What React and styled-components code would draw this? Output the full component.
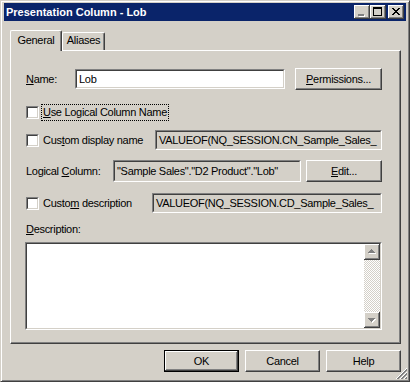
import React from 'react';
import styled, { createGlobalStyle } from 'styled-components';

const FACE = '#D4D0C8';
const SHADOW = '#808080';
const DARK = '#404040';
const HI = '#FFFFFF';

const GlobalStyle = createGlobalStyle`
  html, body { margin: 0; padding: 0; background: ${FACE}; }
  body {
    font-family: "Liberation Sans", Arial, sans-serif;
    font-size: 11px;
    letter-spacing: -0.3px;
    color: #000;
    -webkit-font-smoothing: none;
  }
  #root { width: 410px; height: 382px; }
`;

const Window = styled.div`
  position: relative;
  box-sizing: border-box;
  width: 410px;
  height: 382px;
  background: ${FACE};
  border: 1px solid;
  border-color: ${FACE} ${DARK} ${DARK} ${FACE};
  box-shadow: inset 1px 1px ${HI}, inset -1px -1px ${SHADOW};
  padding: 2px 3px 3px 3px;
  display: flex;
  flex-direction: column;
  overflow: hidden;
`;

const TitleBar = styled.div`
  height: 18px;
  background: #0A246A;
  display: flex;
  align-items: center;
  padding: 0 2px;
`;

const TitleText = styled.span`
  flex: 1;
  color: #fff;
  font-weight: bold;
  font-size: 11px;
  letter-spacing: 0;
  white-space: nowrap;
`;

const CaptionGroup = styled.div`
  display: flex;
  align-items: center;
`;

const CaptionButton = styled.div`
  width: 16px;
  height: 14px;
  margin-left: ${p => p.$gap || 0}px;
  background: ${FACE};
  box-shadow: inset -1px -1px ${DARK}, inset 1px 1px ${HI}, inset -2px -2px ${SHADOW};
  display: flex;
  svg { display: block; }
`;

const TabRow = styled.div`
  display: flex;
  align-items: flex-end;
  height: 20px;
  margin-top: 9px;
  padding-left: 6px;
`;

const Tab = styled.div`
  position: relative;
  z-index: ${p => (p.$active ? 1 : 0)};
  box-sizing: border-box;
  width: ${p => p.$w}px;
  height: ${p => (p.$active ? 21 : 18)}px;
  margin-bottom: ${p => (p.$active ? -1 : 0)}px;
  background: ${FACE};
  border-top: 1px solid ${HI};
  border-left: 1px solid ${HI};
  border-right: 1px solid ${DARK};
  border-radius: 2px 2px 0 0;
  box-shadow: inset -1px 0 ${SHADOW};
  display: flex;
  justify-content: center;
  padding-top: ${p => (p.$active ? 3 : 1)}px;
  line-height: 13px;
  white-space: nowrap;
`;

const Panel = styled.div`
  box-sizing: border-box;
  height: 294px;
  margin: 0 5px 0 6px;
  border: 1px solid;
  border-color: ${HI} ${DARK} ${DARK} ${HI};
  box-shadow: inset -1px -1px ${SHADOW};
  padding: 17px 18px 0 15px;
  display: flex;
  flex-direction: column;
`;

const Row = styled.div`
  display: flex;
  align-items: center;
  height: ${p => p.$h}px;
  margin-top: ${p => p.$mt || 0}px;
  white-space: nowrap;
`;

const Label = styled.span`
  width: ${p => (p.$w ? `${p.$w}px` : 'auto')};
  flex: none;
  line-height: 13px;
`;

const SunkenOuter = styled.div`
  box-sizing: border-box;
  flex: none;
  width: ${p => p.$w}px;
  height: ${p => p.$h}px;
  margin-left: ${p => (p.$ml === 'auto' ? 'auto' : `${p.$ml || 0}px`)};
  border: 1px solid;
  border-color: ${SHADOW} ${HI} ${HI} ${SHADOW};
  display: flex;
`;

const SunkenInner = styled.div`
  flex: 1;
  min-width: 0;
  border: 1px solid;
  border-color: ${DARK} ${FACE} ${FACE} ${DARK};
  background: ${p => (p.$readOnly ? FACE : HI)};
  display: flex;
  align-items: center;
  overflow: hidden;
  padding-left: ${p => p.$pl ?? 2}px;
  white-space: nowrap;
`;

const Button = styled.div`
  box-sizing: border-box;
  flex: none;
  width: ${p => p.$w}px;
  height: 22px;
  margin-left: ${p => p.$ml || 0}px;
  background: ${FACE};
  border: 1px solid;
  border-color: ${p => (p.$default ? '#000' : `${HI} ${DARK} ${DARK} ${HI}`)};
  box-shadow: ${p =>
    p.$default
      ? `inset -1px -1px ${DARK}, inset 1px 1px ${HI}, inset -2px -2px ${SHADOW}`
      : `inset -1px -1px ${SHADOW}`};
  display: flex;
  align-items: center;
  justify-content: center;
  line-height: 13px;
`;

const CheckLabel = styled.span`
  margin-left: ${p => (p.$focus ? 3 : 4)}px;
  padding: ${p => (p.$focus ? '1px 1px' : '0')};
  outline: ${p => (p.$focus ? '1px dotted #000' : 'none')};
  line-height: 13px;
`;

const TextArea = styled.div`
  box-sizing: border-box;
  width: 357px;
  height: 88px;
  margin-left: -1px;
  margin-top: 6px;
  border: 1px solid;
  border-color: ${SHADOW} ${HI} ${HI} ${SHADOW};
  display: flex;
`;

const TextAreaInner = styled.div`
  flex: 1;
  border: 1px solid;
  border-color: ${DARK} ${FACE} ${FACE} ${DARK};
  background: ${HI};
  display: flex;
  justify-content: flex-end;
`;

const ScrollBar = styled.div`
  width: 16px;
  display: flex;
  flex-direction: column;
`;

const ScrollTrack = styled.div`
  flex: 1;
  background-color: ${FACE};
  background-image: repeating-conic-gradient(${HI} 0 25%, ${FACE} 0 50%);
  background-size: 2px 2px;
`;

const ArrowButton = styled.div`
  width: 16px;
  height: 16px;
  flex: none;
  background: ${FACE};
  box-shadow: inset -1px -1px ${DARK}, inset 1px 1px ${HI}, inset -2px -2px ${SHADOW};
  svg { display: block; }
`;

const Footer = styled.div`
  display: flex;
  justify-content: flex-end;
  gap: 6px;
  margin-top: 6px;
  padding-right: 5px;
`;

const Grip = styled.svg`
  position: absolute;
  right: 1px;
  bottom: 1px;
  display: block;
`;

const Cb = () => (
  <SunkenOuter $w={13} $h={13}>
    <SunkenInner />
  </SunkenOuter>
);

const px = (cells, color) =>
  cells.map(([x, y, w, h], i) => <rect key={color + i} x={x} y={y} width={w} height={h} fill={color} />);

const MinGlyph = () => (
  <svg width="16" height="14" viewBox="0 0 16 14" shapeRendering="crispEdges">
    {px([[5, 10, 6, 2]], HI)}
    {px([[4, 9, 6, 2]], SHADOW)}
  </svg>
);

const MaxGlyph = () => (
  <svg width="16" height="14" viewBox="0 0 16 14" shapeRendering="crispEdges">
    {px([[3, 2, 9, 2], [3, 4, 1, 7], [11, 4, 1, 7], [3, 10, 9, 1]], '#000')}
  </svg>
);

const CloseGlyph = () => (
  <svg width="16" height="14" viewBox="0 0 16 14" shapeRendering="crispEdges">
    {px(
      [
        [4, 3, 2, 1], [10, 3, 2, 1],
        [5, 4, 2, 1], [9, 4, 2, 1],
        [6, 5, 4, 1],
        [7, 6, 2, 1],
        [6, 7, 4, 1],
        [5, 8, 2, 1], [9, 8, 2, 1],
        [4, 9, 2, 1], [10, 9, 2, 1],
      ],
      '#000'
    )}
  </svg>
);

const UpGlyph = () => (
  <svg width="16" height="16" viewBox="0 0 16 16" shapeRendering="crispEdges">
    {px([[8, 6, 1, 1], [7, 7, 3, 1], [6, 8, 5, 1], [5, 9, 7, 1]], HI)}
    {px([[7, 5, 1, 1], [6, 6, 3, 1], [5, 7, 5, 1], [4, 8, 7, 1]], SHADOW)}
  </svg>
);

const DownGlyph = () => (
  <svg width="16" height="16" viewBox="0 0 16 16" shapeRendering="crispEdges">
    {px([[5, 7, 7, 1], [6, 8, 5, 1], [7, 9, 3, 1], [8, 10, 1, 1]], HI)}
    {px([[4, 6, 7, 1], [5, 7, 5, 1], [6, 8, 3, 1], [7, 9, 1, 1]], SHADOW)}
  </svg>
);

export default function App() {
  return (
    <>
      <GlobalStyle />
      <Window>
        <TitleBar>
          <TitleText>Presentation Column - Lob</TitleText>
          <CaptionGroup>
            <CaptionButton><MinGlyph /></CaptionButton>
            <CaptionButton><MaxGlyph /></CaptionButton>
            <CaptionButton $gap={2}><CloseGlyph /></CaptionButton>
          </CaptionGroup>
        </TitleBar>

        <TabRow>
          <Tab $active $w={52}>General</Tab>
          <Tab $w={43}>Aliases</Tab>
        </TabRow>

        <Panel>
          <Row $h={22}>
            <Label $w={49}><u>N</u>ame:</Label>
            <SunkenOuter $w={210} $h={20}>
              <SunkenInner>Lob</SunkenInner>
            </SunkenOuter>
            <Button $w={87} $ml={10}><span><u>P</u>ermissions...</span></Button>
          </Row>

          <Row $h={17} $mt={14}>
            <Cb />
            <CheckLabel $focus><u>U</u>se Logical Column Name</CheckLabel>
          </Row>

          <Row $h={20} $mt={9}>
            <Cb />
            <CheckLabel>Cus<u>t</u>om display name</CheckLabel>
            <SunkenOuter $w={227} $h={20} $ml="auto">
              <SunkenInner $readOnly>VALUEOF(NQ_SESSION.CN_Sample_Sales_</SunkenInner>
            </SunkenOuter>
          </Row>

          <Row $h={22} $mt={10}>
            <Label>Logical <u>C</u>olumn:</Label>
            <SunkenOuter $w={188} $h={22} $ml="auto">
              <SunkenInner $readOnly>"Sample Sales"."D2 Product"."Lob"</SunkenInner>
            </SunkenOuter>
            <Button $w={76} $ml={5}><span><u>E</u>dit...</span></Button>
          </Row>

          <Row $h={20} $mt={11}>
            <Cb />
            <CheckLabel>Custo<u>m</u> description</CheckLabel>
            <SunkenOuter $w={230} $h={20} $ml="auto">
              <SunkenInner $readOnly>VALUEOF(NQ_SESSION.CD_Sample_Sales_</SunkenInner>
            </SunkenOuter>
          </Row>

          <Row $h={13} $mt={10}>
            <Label><u>D</u>escription:</Label>
          </Row>

          <TextArea>
            <TextAreaInner>
              <ScrollBar>
                <ArrowButton><UpGlyph /></ArrowButton>
                <ScrollTrack />
                <ArrowButton><DownGlyph /></ArrowButton>
              </ScrollBar>
            </TextAreaInner>
          </TextArea>
        </Panel>

        <Footer>
          <Button $w={75} $default>OK</Button>
          <Button $w={75}>Cancel</Button>
          <Button $w={75}>Help</Button>
        </Footer>

        <Grip width="12" height="12" viewBox="0 0 12 12" shapeRendering="crispEdges">
          <path d="M11 0 L0 11 M11 4 L4 11 M11 8 L8 11" stroke={HI} strokeWidth="1" />
          <path d="M11 1 L1 11 M11 2 L2 11 M11 5 L5 11 M11 6 L6 11 M11 9 L9 11 M11 10 L10 11" stroke={SHADOW} strokeWidth="1" />
        </Grip>
      </Window>
    </>
  );
}
